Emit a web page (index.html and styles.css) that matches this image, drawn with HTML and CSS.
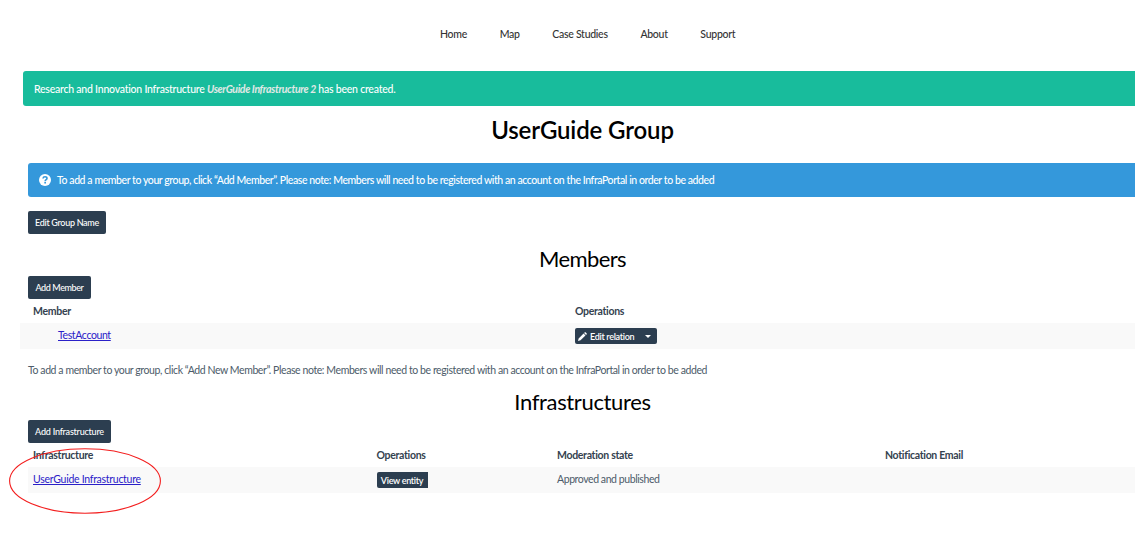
FILE: index.html
```html
<!DOCTYPE html>
<html lang="en">
<head>
<meta charset="utf-8">
<title>UserGuide Group</title>
<link rel="stylesheet" href="styles.css">
</head>
<body>
<nav class="nav">
  <a>Home</a><a>Map</a><a>Case Studies</a><a>About</a><a>Support</a>
</nav>
<div class="alert alert-success"><p class="success-text">Research and Innovation Infrastructure <em>UserGuide Infrastructure 2</em> has been created.</p></div>
<main>
  <h1>UserGuide Group</h1>
  <div class="alert alert-info">
    <svg class="help" viewBox="0 0 12 12"><circle cx="6" cy="6" r="6" fill="#fff"/><path d="M4 4.5C4.1 3.3 4.9 2.8 6 2.8C7.3 2.8 8 3.5 8 4.4C8 5.7 6.2 5.6 6.2 7" fill="none" stroke="#3498db" stroke-width="1.6"/><path d="M5.3 7.8h1.7v1.6H5.3z" fill="#3498db"/></svg>
    <p class="info-text">To add a member to your group, click “Add Member”. Please note: Members will need to be registered with an account on the InfraPortal in order to be added</p>
  </div>
  <button class="btn edit-group">Edit Group Name</button>
  <h2 class="members-title">Members</h2>
  <button class="btn add-member">Add Member</button>
  <div class="row head members"><span>Member</span><span>Operations</span></div>
  <div class="row body members">
    <div class="account"><a class="link">TestAccount</a></div>
    <div><button class="small-btn relation"><svg class="pencil" viewBox="0 0 10 10"><path d="M0 10L.7 7.2L6.2 1.7L8.3 3.8L2.8 9.3ZM6.8 1.1L7.6.3Q8 0 8.4.3L9.7 1.6Q10 2 9.7 2.4L8.9 3.2Z" fill="#fff"/></svg><span>Edit relation</span><i class="caret"></i></button></div>
  </div>
  <p class="note">To add a member to your group, click “Add New Member”. Please note: Members will need to be registered with an account on the InfraPortal in order to be added</p>
  <h2 class="infra-title">Infrastructures</h2>
  <button class="btn add-infra">Add Infrastructure</button>
  <div class="row head infra"><span>Infrastructure</span><span>Operations</span><span>Moderation state</span><span>Notification Email</span></div>
  <div class="row body infra">
    <div class="cell"><a class="link">UserGuide Infrastructure</a></div>
    <div><button class="small-btn view">View entity</button></div>
    <div class="cell state">Approved and published</div>
    <div></div>
  </div>
</main>
<svg class="annotation" viewBox="0 0 152 66"><ellipse cx="76" cy="33" rx="75.4" ry="32.2" fill="none" stroke="#f31d1d" stroke-width="1.1"/></svg>
</body>
</html>
```

FILE: styles.css
```css
* { box-sizing: border-box; }
body { margin: 0; width: 1135px; height: 540px; overflow: hidden; position: relative; background: #fff; color: #4c5b69; font: 10.5px/14px Lato, "Liberation Sans", sans-serif; letter-spacing: -0.28px; }
p, h1, h2 { margin: 0; white-space: nowrap; }
button { font-family: inherit; border: 0; margin: 0; color: #fff; background: #2c3e50; white-space: nowrap; cursor: pointer; letter-spacing: -0.3px; }
.nav { display: flex; gap: 32.7px; height: 71px; padding: 27px 0 0 440px; color: #333; font-weight: 500; letter-spacing: -0.28px; }
.alert { display: flex; align-items: center; color: #fff; border-radius: 3px 0 0 3px; font-weight: 500; }
.alert-success { height: 35px; margin-left: 23px; padding: 0 0 0 11px; background: #18bc9c; }
.success-text { letter-spacing: -0.23px; }
.alert em { font-weight: 700; color: #e0e9e6; letter-spacing: -0.36px; }
.info-text { letter-spacing: -0.42px; }
main { display: flex; flex-direction: column; align-items: flex-start; padding-left: 28px; }
h1, h2 { width: 100%; padding-left: 2px; text-align: center; color: #000; }
h1 { height: 57px; padding-top: 9px; font-size: 24px; line-height: 30px; font-weight: 600; letter-spacing: -0.13px; }
h2 { font-size: 22px; line-height: 28px; font-weight: 400; letter-spacing: -0.35px; }
.alert-info { width: 100%; height: 34px; padding-left: 11px; background: #3498db; }
.help { width: 12px; height: 12px; margin-right: 6px; }
.btn { height: 23px; padding: 0; font-size: 9px; line-height: 23px; font-weight: 500; border-radius: 2px; }
.edit-group { width: 78px; margin-top: 14px; }
.members-title { margin: 11px 0 3px; letter-spacing: -0.6px; }
.add-member { width: 63px; letter-spacing: -0.4px; }
.row { display: grid; align-items: center; white-space: nowrap; }
.row.members { grid-template-columns: 542px 1fr; width: 1115px; margin-left: -8px; padding-left: 13px; }
.row.infra { grid-template-columns: 343.5px 180.5px 328px 1fr; width: 100%; padding-left: 5px; }
.head { height: 24px; color: #34424f; font-weight: 700; letter-spacing: -0.31px; }
.body { height: 26px; background: #f9f9f9; }
.account { padding: 0 0 2px 25px; letter-spacing: -0.38px; }
.cell { padding-bottom: 2px; }
.state { letter-spacing: -0.42px; }
.link { color: #2a20c8; text-decoration: underline; }
.small-btn { display: flex; align-items: center; height: 16px; padding: 0; font-size: 9px; font-weight: 600; border-radius: 2px; }
.relation { width: 82px; padding-left: 3px; }
.pencil { width: 9px; height: 9px; margin-right: 3px; }
.caret { margin-left: 11px; border: 3px solid transparent; border-top-color: #fff; border-bottom: 0; }
.view { width: 51px; justify-content: center; border-radius: 2px 0 0 2px; }
.note { margin-top: 14px; letter-spacing: -0.41px; }
.infra-title { margin: 11px 0 4px; }
.add-infra { width: 83px; letter-spacing: -0.22px; }
.annotation { position: absolute; left: 9px; top: 448px; width: 152px; height: 66px; }
```
